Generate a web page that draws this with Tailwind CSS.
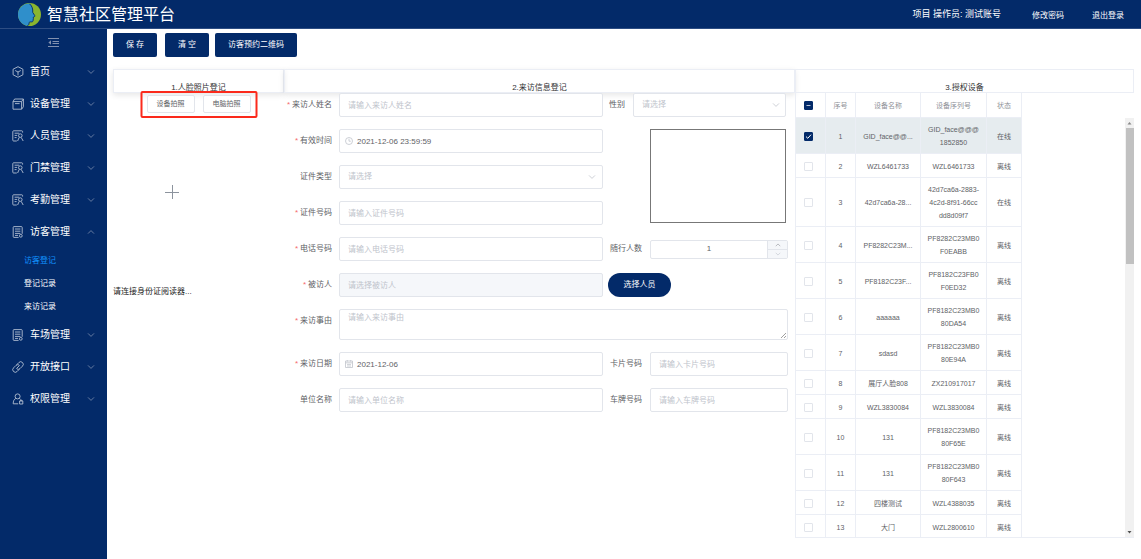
<!DOCTYPE html>
<html lang="zh-CN">
<head>
<meta charset="utf-8">
<meta name="viewport" content="width=device-width, initial-scale=1">
<title>智慧社区管理平台</title>
<script src="https://cdn.jsdelivr.net/npm/@tailwindcss/browser@4"></script>
</head>
<body class="flex h-screen flex-col overflow-hidden bg-white font-['Liberation_Sans','Noto_Sans_CJK_SC',sans-serif] text-[8px] leading-3 text-[#606266]">

<svg class="hidden">
  <symbol id="down" viewBox="0 0 8 8"><path d="M1 2.4 4 5.4 7 2.4" fill="none" stroke="currentColor" stroke-width=".8"/></symbol>
  <symbol id="up" viewBox="0 0 8 8"><path d="M1 5.6 4 2.6 7 5.6" fill="none" stroke="currentColor" stroke-width=".8"/></symbol>
  <symbol id="person-card" viewBox="0 0 12 12"><g fill="none" stroke="currentColor" stroke-width=".9"><path d="M10.6 2.6V1.6a.8.8 0 0 0-.8-.8H1.6a.8.8 0 0 0-.8.8v8.6a.8.8 0 0 0 .8.8h3.2M2.6 3.2h4.6M2.6 5.4h2.6M2.6 7.6h2"/><circle cx="8.3" cy="5.6" r="1.8"/><path d="M5.6 11 7.2 7.4M9.2 7.4 11.2 11"/></g></symbol>
  <symbol id="doc" viewBox="0 0 12 12"><g fill="none" stroke="currentColor" stroke-width=".9"><path d="M6.6 11.4H2a.8.8 0 0 1-.8-.8V1.4A.8.8 0 0 1 2 .6h7.4a.8.8 0 0 1 .8.8v6.4M3 3h5.4M3 5.2h5.4M3 7.4h5.4M3 9.4h3"/><circle cx="8.8" cy="9.8" r="1.4"/></g></symbol>
</svg>

<header class="flex h-[29px] shrink-0 items-center border-b border-[#2d4d83] bg-[#032a69] pr-[17px] pl-[18px] text-white">
  <svg class="mt-px mr-[6px] size-[23px]" viewBox="0 0 23 23" aria-hidden="true">
    <circle cx="11.5" cy="11.5" r="11.5" fill="#8ab52f"/>
    <path d="M12 .6C5 .6 0 5.4 0 11.5c0 5.6 3.6 10.2 9.4 11.2 1.2-.3 1.6-1.2 1.7-2.9.1-.8.9-.9 2.5-.8 1.3 0 1.6-.6 1.500-1.700l.3-1.600c.2-.6.1-1-.1-1.400l1.400-.7c.5-.3.3-.7 0-1.200l-1.900-3c.3-3.200-.3-6.200-2.800-8.800z" fill="#2f8fcb"/>
    <path d="M11.500.8c2.800 2.400 3.500 5.300 3.200 8.600l2 3.100c.3.500.3.800-.2 1.100l-1.200.6.1 1.300-.3 1.500c.1 1.200-.3 1.900-1.600 1.900-1.500-.1-2.300.1-2.400.9-.1 1.700-.5 2.500-1.700 2.900" fill="none" stroke="#032a69" stroke-width=".9"/>
  </svg>
  <h1 class="mt-[2px] text-base leading-6">智慧社区管理平台</h1>
  <span class="ml-auto text-[9px]">项目 操作员: 测试账号</span>
  <a href="#" class="mt-[3px] ml-[31px]">修改密码</a>
  <a href="#" class="mt-[3px] ml-7">退出登录</a>
</header>

<div class="flex min-h-0 flex-1">
  <nav class="w-[107px] shrink-0 bg-[#032a69] text-[10px] text-white" aria-label="主菜单">
    <button type="button" class="flex h-[27px] w-full items-center justify-center text-[#8291af]" aria-label="收起菜单">
      <svg class="size-[11px]" viewBox="0 0 11 11" fill="none" stroke="currentColor"><path d="M0 1.500h11M4.500 4.500h6.500M4.500 6.500h6.500M0 9.500h11"/><path d="M3 3.200v4.600L.4 5.500z" fill="currentColor" stroke="none"/></svg>
    </button>
    <a href="#" class="flex h-8 items-center pr-3 pl-[12px]"><svg class="mr-[6px] size-3 text-[#b3bfd3]" viewBox="0 0 12 12" fill="none" stroke="currentColor" stroke-width=".9"><path d="M6 .7 10.900 3.200v5.600L6 11.300 1.100 8.800V3.200zM3.200 4.500 6 6l2.800-1.500M6 6v3.400"/></svg>首页<svg class="ml-auto size-2 text-[#7f8fae]"><use href="#down"/></svg></a>
    <a href="#" class="flex h-8 items-center pr-3 pl-[12px]"><svg class="mr-[6px] size-3 text-[#b3bfd3]" viewBox="0 0 12 12" fill="none" stroke="currentColor" stroke-width=".9"><path d="M1 3.600h8.600v7.600H1zM1 3.600 2.600 1h8.800L9.600 3.600M11.400 1v7.800L9.600 11.200M3 5.600h4.600"/></svg>设备管理<svg class="ml-auto size-2 text-[#7f8fae]"><use href="#down"/></svg></a>
    <a href="#" class="flex h-8 items-center pr-3 pl-[12px]"><svg class="mr-[6px] size-3 text-[#b3bfd3]"><use href="#person-card"/></svg>人员管理<svg class="ml-auto size-2 text-[#7f8fae]"><use href="#down"/></svg></a>
    <a href="#" class="flex h-8 items-center pr-3 pl-[12px]"><svg class="mr-[6px] size-3 text-[#b3bfd3]"><use href="#person-card"/></svg>门禁管理<svg class="ml-auto size-2 text-[#7f8fae]"><use href="#down"/></svg></a>
    <a href="#" class="flex h-8 items-center pr-3 pl-[12px]"><svg class="mr-[6px] size-3 text-[#b3bfd3]"><use href="#person-card"/></svg>考勤管理<svg class="ml-auto size-2 text-[#7f8fae]"><use href="#down"/></svg></a>
    <a href="#" class="flex h-8 items-center pr-3 pl-[12px]"><svg class="mr-[6px] size-3 text-[#b3bfd3]"><use href="#doc"/></svg>访客管理<svg class="ml-auto size-2 text-[#7f8fae]"><use href="#up"/></svg></a>
    <div class="py-px text-[8px]">
      <a href="#" class="flex h-[23px] items-center pl-6 text-[#1193ff]" aria-current="page">访客登记</a>
      <a href="#" class="flex h-[23px] items-center pl-6">登记记录</a>
      <a href="#" class="flex h-[23px] items-center pl-6">来访记录</a>
    </div>
    <a href="#" class="flex h-8 items-center pr-3 pl-[12px]"><svg class="mr-[6px] size-3 text-[#b3bfd3]"><use href="#doc"/></svg>车场管理<svg class="ml-auto size-2 text-[#7f8fae]"><use href="#down"/></svg></a>
    <a href="#" class="flex h-8 items-center pr-3 pl-[12px]"><svg class="mr-[6px] size-3 text-[#b3bfd3]" viewBox="0 0 12 12" fill="none" stroke="currentColor" stroke-width=".9" stroke-linecap="round"><path d="M5 3.400 6.900 1.500a2.500 2.500 0 0 1 3.600 3.600L8 7.600a2.500 2.500 0 0 1-2.600.6M7 8.600 5.100 10.500a2.500 2.500 0 0 1-3.600-3.600L4 4.400a2.500 2.500 0 0 1 2.600-.6M4.600 7.400l2.800-2.800"/></svg>开放接口<svg class="ml-auto size-2 text-[#7f8fae]"><use href="#down"/></svg></a>
    <a href="#" class="flex h-8 items-center pr-3 pl-[12px]"><svg class="mr-[6px] size-3 text-[#b3bfd3]" viewBox="0 0 12 12" fill="none" stroke="currentColor" stroke-width=".9"><circle cx="5.600" cy="3.400" r="2.500"/><path d="M3.800 5.400C2 6.400 1.200 8 1.200 10.800h5M7.400 5.400l1.200 1M7.600 8h3.200v3H7.600zM8.400 8V7.200h1.600V8"/></svg>权限管理<svg class="ml-auto size-2 text-[#7f8fae]"><use href="#down"/></svg></a>
  </nav>

  <main class="flex min-w-0 flex-1 flex-col pt-1 pr-[7px] pb-[21px] pl-[6px]">
    <div class="flex shrink-0 text-white">
      <button type="button" class="h-6 w-11 rounded-xs bg-[#032a69]">保 存</button>
      <button type="button" class="ml-2 h-6 w-11 rounded-xs bg-[#032a69]">清 空</button>
      <button type="button" class="ml-[6px] h-6 rounded-xs bg-[#032a69] px-[13px]">访客预约二维码</button>
    </div>

    <div class="mt-3 grid min-h-0 flex-1 grid-cols-[171fr_511fr_339fr] grid-rows-[minmax(0,1fr)]">

      <section class="flex flex-col">
        <h2 class="flex h-6 shrink-0 items-end justify-center border border-[#ebeef5] leading-[9px] text-[#303133] shadow-[0_2px_6px_rgba(0,0,0,0.1)]">1.人脸照片登记</h2>
        <div class="relative flex justify-center gap-2 pt-[2px]">
          <button type="button" class="h-[18px] w-12 rounded-xs border border-[#e2e5eb] bg-white text-[7px]">设备拍照</button>
          <button type="button" class="h-[18px] w-12 rounded-xs border border-[#e2e5eb] bg-white text-[7px]">电脑拍照</button>
          <div class="absolute -top-[2px] left-1/2 h-[27px] w-[117px] -translate-x-1/2 rounded-xs border-2 border-[#fb2a1c]"></div>
        </div>
        <button type="button" class="mt-[6px] mr-[53px] flex h-[146px] items-center justify-center self-center text-[#8c939d]" aria-label="上传人脸照片">
          <svg class="size-[14px]" viewBox="0 0 14 14" stroke="currentColor" fill="none"><path d="M7.500 0v14M0 7.500h14"/></svg>
        </button>
        <p class="mt-[21px] text-[#222]">请连接身份证阅读器...</p>
      </section>

      <section class="flex flex-col">
        <h2 class="flex h-6 shrink-0 items-end justify-center border border-[#ebeef5] leading-[9px] text-[#303133] shadow-[0_2px_6px_rgba(0,0,0,0.1)]">2.来访信息登记</h2>
        <form class="grid grid-cols-[48px_minmax(0,1fr)_185px] gap-y-3 pr-[7px] [&_.field]:h-6 [&_.field]:w-full [&_.field]:rounded-xs [&_.field]:border [&_.field]:border-[#e2e5eb] [&_.field]:px-2 [&_.field]:placeholder-[#c0c4cc]">
          <label for="name" class="flex h-6 items-center justify-end gap-[2px]"><span class="text-[#f56c6c]">*</span>来访人姓名</label>
          <div class="pl-[7px]"><input id="name" class="field bg-white" placeholder="请输入来访人姓名"></div>
          <div class="flex items-center pr-[2px] pl-[6px]">
            <label for="sex" class="shrink-0 pr-2">性别</label>
            <div class="relative flex-1"><select id="sex" class="field block appearance-none bg-white text-[#c0c4cc]"><option>请选择</option></select><svg class="pointer-events-none absolute top-2 right-[6px] size-2 text-[#c0c4cc]"><use href="#down"/></svg></div>
          </div>

          <label for="valid" class="flex h-6 items-center justify-end gap-[2px]"><span class="text-[#f56c6c]">*</span>有效时间</label>
          <div class="relative pl-[7px]"><input id="valid" class="field indent-[9px]" value="2021-12-06 23:59:59"><svg class="absolute top-2 left-[13px] size-2 text-[#c0c4cc]" viewBox="0 0 8 8" fill="none" stroke="currentColor" stroke-width=".8"><circle cx="4" cy="4" r="3.500"/><path d="M4 1.800V4.200H5.800"/></svg></div>
          <div class="row-span-3 mr-[2px] mb-[2px] ml-[47px] border border-[#777]"></div>

          <label for="idtype" class="flex h-6 items-center justify-end">证件类型</label>
          <div class="relative pl-[7px]"><select id="idtype" class="field block appearance-none text-[#c0c4cc]"><option>请选择</option></select><svg class="pointer-events-none absolute top-2 right-[7px] size-2 text-[#c0c4cc]"><use href="#down"/></svg></div>

          <label for="idno" class="flex h-6 items-center justify-end gap-[2px]"><span class="text-[#f56c6c]">*</span>证件号码</label>
          <div class="pl-[7px]"><input id="idno" class="field" placeholder="请输入证件号码"></div>

          <label for="phone" class="flex h-6 items-center justify-end gap-[2px]"><span class="text-[#f56c6c]">*</span>电话号码</label>
          <div class="pl-[7px]"><input id="phone" class="field" placeholder="请输入电话号码"></div>
          <div class="flex items-center pl-[6px]">
            <label for="count" class="w-[41px] shrink-0 pr-2 text-right">随行人数</label>
            <div class="flex h-[19px] min-w-0 flex-1 overflow-hidden rounded-xs border border-[#e2e5eb]">
              <input id="count" class="w-full min-w-0 flex-1 text-center" value="1">
              <div class="flex w-5 flex-col divide-y divide-[#e2e5eb] border-l border-[#e2e5eb] bg-[#f5f7fa] text-[#909399]">
                <button type="button" class="flex flex-1 items-center justify-center" aria-label="增加"><svg class="size-[6px]"><use href="#up"/></svg></button>
                <button type="button" class="flex flex-1 items-center justify-center text-[#c0c4cc]" aria-label="减少"><svg class="size-[6px]"><use href="#down"/></svg></button>
              </div>
            </div>
          </div>

          <label for="host" class="flex h-6 items-center justify-end gap-[2px]"><span class="text-[#f56c6c]">*</span>被访人</label>
          <div class="pl-[7px]"><input id="host" class="field bg-[#f5f7fa]" placeholder="请选择被访人" disabled></div>
          <div class="pl-[5px]"><button type="button" class="h-6 w-[63px] rounded-full bg-[#032a69] text-white">选择人员</button></div>

          <label for="reason" class="flex h-6 items-center justify-end gap-[2px]"><span class="text-[#f56c6c]">*</span>来访事由</label>
          <div class="relative col-span-2 pl-[7px]"><textarea id="reason" class="block h-[31px] w-full resize-none rounded-xs border border-[#e2e5eb] px-2 py-[2px] placeholder-[#c0c4cc]" placeholder="请输入来访事由"></textarea><svg class="absolute right-[2px] bottom-[2px] size-[5px]" viewBox="0 0 5 5" stroke="#888" stroke-width=".8"><path d="M0 5 5 0M3 5 5 3"/></svg></div>

          <label for="date" class="flex h-6 items-center justify-end gap-[2px]"><span class="text-[#f56c6c]">*</span>来访日期</label>
          <div class="relative pl-[7px]"><input id="date" class="field indent-[9px]" value="2021-12-06"><svg class="absolute top-2 left-[13px] size-2 text-[#c0c4cc]" viewBox="0 0 8 8" fill="none" stroke="currentColor" stroke-width=".8"><path d="M.5 1h7v6.500h-7zM.5 2.800h7M2 4.400h4M2 6h4M2.300 0v1.600M5.700 0v1.600"/></svg></div>
          <div class="flex items-center pl-[6px]">
            <label for="card" class="w-[41px] shrink-0 pr-2 text-right">卡片号码</label>
            <input id="card" class="field min-w-0 flex-1" placeholder="请输入卡片号码">
          </div>

          <label for="unit" class="flex h-6 items-center justify-end">单位名称</label>
          <div class="pl-[7px]"><input id="unit" class="field" placeholder="请输入单位名称"></div>
          <div class="flex items-center pl-[6px]">
            <label for="plate" class="w-[41px] shrink-0 pr-2 text-right">车牌号码</label>
            <input id="plate" class="field min-w-0 flex-1" placeholder="请输入车牌号码">
          </div>
        </form>
      </section>

      <section class="flex min-h-0 flex-col border-b border-l border-[#ebeef5]">
        <h2 class="flex h-6 shrink-0 items-end justify-center border border-l-0 border-[#ebeef5] leading-[9px] text-[#303133]">3.授权设备</h2>
        <div class="flex min-h-0 flex-1 text-[7px] leading-[13px]">
          <div class="min-w-0 flex-1 overflow-hidden">
            <table class="w-[226px] table-fixed border-separate border-spacing-0 text-center [&_input]:block [&_input]:size-[9px] [&_input]:appearance-none [&_input]:rounded-[1px] [&_input]:border [&_input]:border-[#e2e5eb] [&_input]:checked:border-[#032a69] [&_input]:checked:bg-[#032a69] [&_td]:border-r [&_td]:border-b [&_td]:border-[#ebeef5] [&_td]:px-[5px] [&_td]:pt-[5px] [&_td]:pb-1 [&_td:first-child]:pl-2 [&_td:nth-child(3)]:whitespace-nowrap [&_th]:border-r [&_th]:border-b [&_th]:border-[#ebeef5] [&_th]:font-normal [&_th]:text-[#909399] [&_th:first-child]:pl-2 [&_tr]:h-6">
              <colgroup><col class="w-[30px]"><col class="w-[30px]"><col class="w-[65px]"><col class="w-[66px]"><col class="w-[35px]"></colgroup>
              <thead>
                <tr><th class="h-[25px]"><span class="relative block"><input type="checkbox" checked aria-label="全选"><svg class="pointer-events-none absolute top-0 left-0 size-[9px]" viewBox="0 0 9 9"><path d="M2.500 4.500h4" stroke="#b9c4d6"/></svg></span></th><th>序号</th><th>设备名称</th><th>设备序列号</th><th>状态</th></tr>
              </thead>
              <tbody>
                <tr class="bg-[#e6ecef]"><td><span class="relative block"><input type="checkbox" checked aria-label="选择 1"><svg class="pointer-events-none absolute top-0 left-0 size-[9px]" viewBox="0 0 9 9"><path d="M2 4.600 3.800 6.300 7 2.700" stroke="#fff" fill="none"/></svg></span></td><td>1</td><td>GID_face@@...</td><td>GID_face@@@<br>1852850</td><td>在线</td></tr>
                <tr><td><input type="checkbox" aria-label="选择 2"></td><td>2</td><td>WZL6461733</td><td>WZL6461733</td><td>离线</td></tr>
                <tr><td><input type="checkbox" aria-label="选择 3"></td><td>3</td><td>42d7ca6a-28...</td><td>42d7ca6a-2883-<br>4c2d-8f91-66cc<br>dd8d09f7</td><td>在线</td></tr>
                <tr><td><input type="checkbox" aria-label="选择 4"></td><td>4</td><td>PF8282C23M...</td><td>PF8282C23MB0<br>F0EABB</td><td>离线</td></tr>
                <tr><td><input type="checkbox" aria-label="选择 5"></td><td>5</td><td>PF8182C23F...</td><td>PF8182C23FB0<br>F0ED32</td><td>离线</td></tr>
                <tr><td><input type="checkbox" aria-label="选择 6"></td><td>6</td><td>aaaaaa</td><td>PF8182C23MB0<br>80DA54</td><td>离线</td></tr>
                <tr><td><input type="checkbox" aria-label="选择 7"></td><td>7</td><td>sdasd</td><td>PF8182C23MB0<br>80E94A</td><td>离线</td></tr>
                <tr><td><input type="checkbox" aria-label="选择 8"></td><td>8</td><td>展厅人脸808</td><td>ZX210917017</td><td>离线</td></tr>
                <tr><td><input type="checkbox" aria-label="选择 9"></td><td>9</td><td>WZL3830084</td><td>WZL3830084</td><td>离线</td></tr>
                <tr><td><input type="checkbox" aria-label="选择 10"></td><td>10</td><td>131</td><td>PF8182C23MB0<br>80F65E</td><td>离线</td></tr>
                <tr><td><input type="checkbox" aria-label="选择 11"></td><td>11</td><td>131</td><td>PF8182C23MB0<br>80F643</td><td>离线</td></tr>
                <tr><td><input type="checkbox" aria-label="选择 12"></td><td>12</td><td>四楼测试</td><td>WZL4388035</td><td>离线</td></tr>
                <tr><td><input type="checkbox" aria-label="选择 13"></td><td>13</td><td>大门</td><td>WZL2800610</td><td>离线</td></tr>
              </tbody>
            </table>
          </div>
          <div class="mt-[25px] flex w-[9px] flex-col items-center bg-[#f1f1f1]" aria-hidden="true">
            <svg class="h-[10px] w-[9px]" viewBox="0 0 9 10"><path d="M2.500 6.500 4.500 4l2 2.500z" fill="#888"/></svg>
            <div class="h-[136px] w-2 bg-[#c1c1c1]"></div>
            <svg class="mt-auto h-[10px] w-[9px]" viewBox="0 0 9 10"><path d="M2.500 4 4.500 6.500l2-2.500z" fill="#505050"/></svg>
          </div>
        </div>
      </section>
    </div>
  </main>
</div>
</body>
</html>
